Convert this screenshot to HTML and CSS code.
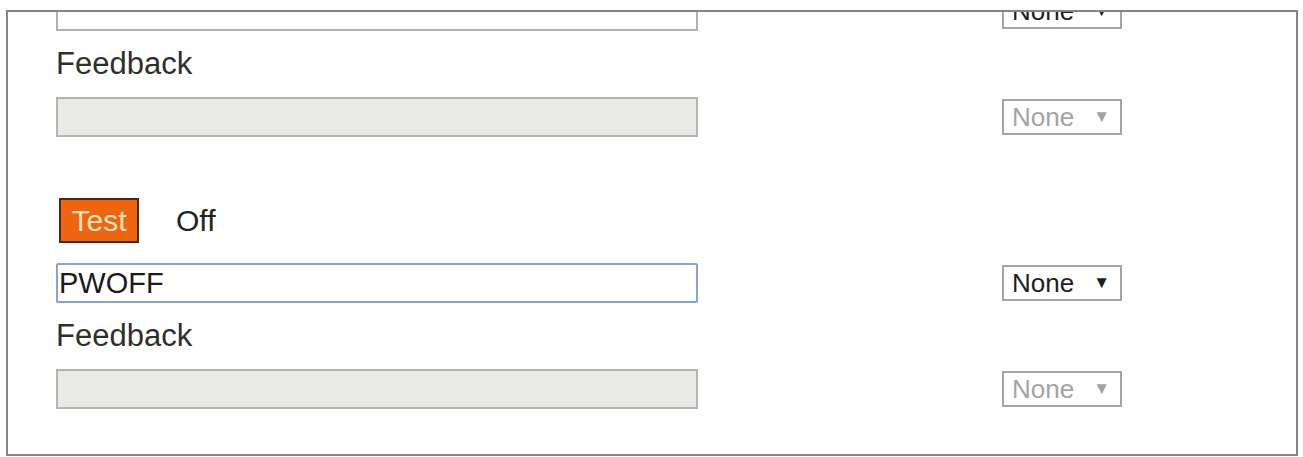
FILE: index.html
```html
<!DOCTYPE html>
<html>
<head>
<meta charset="utf-8">
<link rel="stylesheet" href="styles.css">
</head>
<body>
<div class="frame">
  <div class="row row-first">
    <div class="field field-text"></div>
    <div class="select"><span>None</span><span class="arrow">&#9660;</span></div>
  </div>
  <div class="label">Feedback</div>
  <div class="row row-fb1">
    <div class="field field-disabled"></div>
    <div class="select select-disabled"><span>None</span><span class="arrow">&#9660;</span></div>
  </div>
  <div class="test-row">
    <span class="test-btn">Test</span>
    <span class="state">Off</span>
  </div>
  <div class="row row-cmd">
    <div class="field field-focus">PWOFF</div>
    <div class="select"><span>None</span><span class="arrow">&#9660;</span></div>
  </div>
  <div class="label label2">Feedback</div>
  <div class="row row-fb2">
    <div class="field field-disabled"></div>
    <div class="select select-disabled"><span>None</span><span class="arrow">&#9660;</span></div>
  </div>
</div>
</body>
</html>
```

FILE: styles.css
```css
html, body {
  margin: 0;
  padding: 0;
  background: #ffffff;
}
body {
  font-family: "Liberation Sans", Arial, sans-serif;
  color: #2e3129;
}
.frame {
  box-sizing: border-box;
  width: 1292px;
  height: 446px;
  margin: 10px 0 0 6px;
  border: 2px solid #858585;
  overflow: hidden;
  padding-left: 48px;
  display: flex;
  flex-direction: column;
  align-items: flex-start;
}
.row {
  display: flex;
  align-items: center;
  gap: 304px;
}
.row-first { margin-top: -21px; }
.row-fb1 { margin-top: 17px; }
.row-cmd { margin-top: 20px; }
.row-fb2 { margin-top: 17px; }
.field {
  box-sizing: border-box;
  width: 642px;
  height: 40px;
  border: 2px solid #b0b0ae;
  background: #ffffff;
  font-size: 29px;
  line-height: 36px;
  padding-left: 1px;
  color: #1a1a1a;
}
.field-disabled {
  background: #e9e9e5;
  border-color: #b4b4b0;
}
.field-focus {
  border-color: #86a3d4;
  border-radius: 2px;
}
.select {
  box-sizing: border-box;
  width: 120px;
  height: 36px;
  border: 2px solid #a4a4a4;
  display: flex;
  align-items: center;
  justify-content: space-between;
  padding: 0 10px 0 8px;
  font-size: 26px;
  color: #1e1e1e;
}
.select-disabled {
  color: #a3a3a3;
}
.arrow {
  font-size: 17px;
  line-height: 1;
  margin-top: -2px;
}
.label {
  margin-top: 16px;
  font-size: 31px;
  line-height: 34px;
}
.label2 { margin-top: 16px; }
.row-fb1, .row-fb2 { margin-top: 16px; }
.test-row {
  margin-top: 61px;
  display: flex;
  align-items: center;
}
.test-btn {
  box-sizing: border-box;
  margin-left: 3px;
  width: 80px;
  height: 45px;
  background: #ef650f;
  border: 2px solid #4c2814;
  color: #fde2c6;
  font-size: 30px;
  line-height: 41px;
  text-align: center;
}
.state {
  margin-left: 37px;
  font-size: 30px;
  color: #222222;
}
```
